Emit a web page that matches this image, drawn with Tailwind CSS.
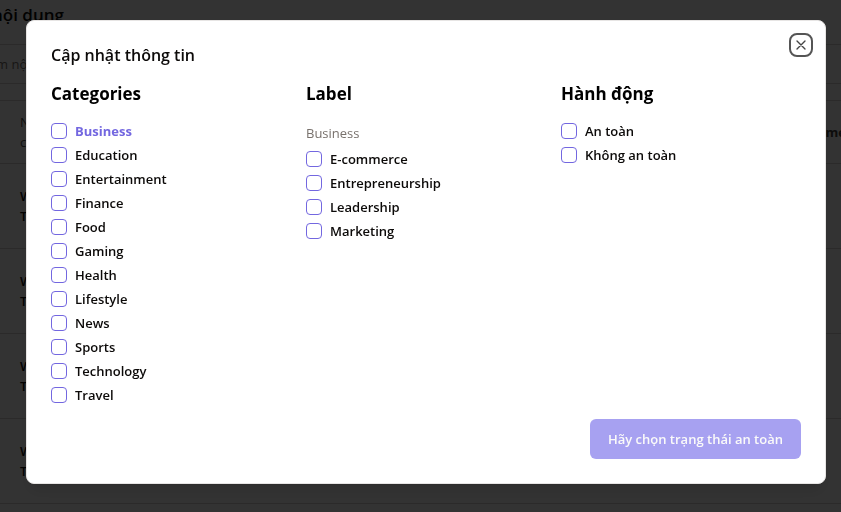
<!DOCTYPE html>
<html lang="vi">
<head>
<meta charset="utf-8">
<meta name="viewport" content="width=device-width, initial-scale=1">
<title>Cập nhật thông tin</title>
<script src="https://cdn.jsdelivr.net/npm/@tailwindcss/browser@4"></script>
</head>
<body class="overflow-hidden bg-white font-['Open_Sans','Noto_Sans',sans-serif] text-[13px] leading-5 text-[#0c0a09]">
<main class="h-screen overflow-hidden" aria-hidden="true">
  <h1 class="h-11 text-[17px] leading-[30px] font-semibold"><span class="-ml-2">nội dung</span></h1>
  <div class="flex h-10 items-center border-y border-[#d6d3d1] text-[#78716c]"><span class="-ml-1">m nội</span></div>
  <table class="mt-4 w-[calc(100%+5px)] border-collapse border-t border-[#d6d3d1] font-semibold">
    <thead>
      <tr class="h-[63px] border-b border-[#d6d3d1] text-[#57534e]"><th class="pl-5 text-left font-medium">N<br>c</th><th class="text-right font-bold text-[#44403c]">me</th></tr>
    </thead>
    <tbody>
      <tr class="h-[85px] border-b border-[#d6d3d1]"><td class="pl-5">W<br>T</td><td></td></tr>
      <tr class="h-[85px] border-b border-[#d6d3d1]"><td class="pl-5">W<br>T</td><td></td></tr>
      <tr class="h-[85px] border-b border-[#d6d3d1]"><td class="pl-5">W<br>T</td><td></td></tr>
      <tr class="h-[85px] border-b border-[#d6d3d1]"><td class="pl-5">W<br>T</td><td></td></tr>
    </tbody>
  </table>
</main>
<div class="fixed inset-0 flex items-center justify-center bg-black/80 pb-2 pl-[11px]">
  <div role="dialog" aria-modal="true" aria-labelledby="title" class="relative grid w-full max-w-[800px] gap-[14px] rounded-lg border border-[#e7e5e4] bg-white p-6 shadow-lg">
    <h2 id="title" class="text-base leading-5 font-semibold">Cập nhật thông tin</h2>
    <form class="flex flex-col gap-3">
      <div class="grid grid-cols-3 gap-[15px]">
        <fieldset>
          <legend class="mb-[10px] text-[17px] leading-[30px] font-bold text-black">Categories</legend>
          <div id="categories"></div>
        </fieldset>
        <fieldset>
          <legend class="mb-[10px] text-[17px] leading-[30px] font-bold text-black">Label</legend>
          <p class="leading-7 text-[#78716c]">Business</p>
          <div id="labels"></div>
        </fieldset>
        <fieldset>
          <legend class="mb-[10px] text-[17px] leading-[30px] font-bold text-black">Hành động</legend>
          <div id="actions"></div>
        </fieldset>
      </div>
      <button type="button" disabled class="h-10 self-end rounded-md bg-[#a7a1f1] px-[18px] font-semibold text-[#fafaf9]">Hãy chọn trạng thái an toàn</button>
    </form>
    <button type="button" aria-label="Đóng" class="absolute top-3 right-3 flex size-6 items-center justify-center rounded-lg border-2 border-[#555] text-[#444]">
      <svg class="size-4" viewBox="0 0 24 24" fill="none" stroke="currentColor" stroke-width="2" stroke-linecap="round"><path d="M18 6 6 18M6 6l12 12"/></svg>
    </button>
  </div>
</div>
<script>
const groups = {
  categories: ['Business', 'Education', 'Entertainment', 'Finance', 'Food', 'Gaming', 'Health', 'Lifestyle', 'News', 'Sports', 'Technology', 'Travel'],
  labels: ['E-commerce', 'Entrepreneurship', 'Leadership', 'Marketing'],
  actions: ['An toàn', 'Không an toàn']
};
for (const [group, items] of Object.entries(groups)) {
  document.getElementById(group).innerHTML = items.map((name, i) => {
    const id = group + '-' + i;
    const tone = group === 'categories' && i === 0 ? 'font-bold text-[#7367e0]' : 'font-semibold';
    return `<div class="flex h-6 items-center gap-2"><input type="checkbox" id="${id}" class="size-4 shrink-0 appearance-none rounded border border-[#7367e0] bg-white checked:bg-[#7367e0]"><label for="${id}" class="${tone}">${name}</label></div>`;
  }).join('');
}
</script>
</body>
</html>
